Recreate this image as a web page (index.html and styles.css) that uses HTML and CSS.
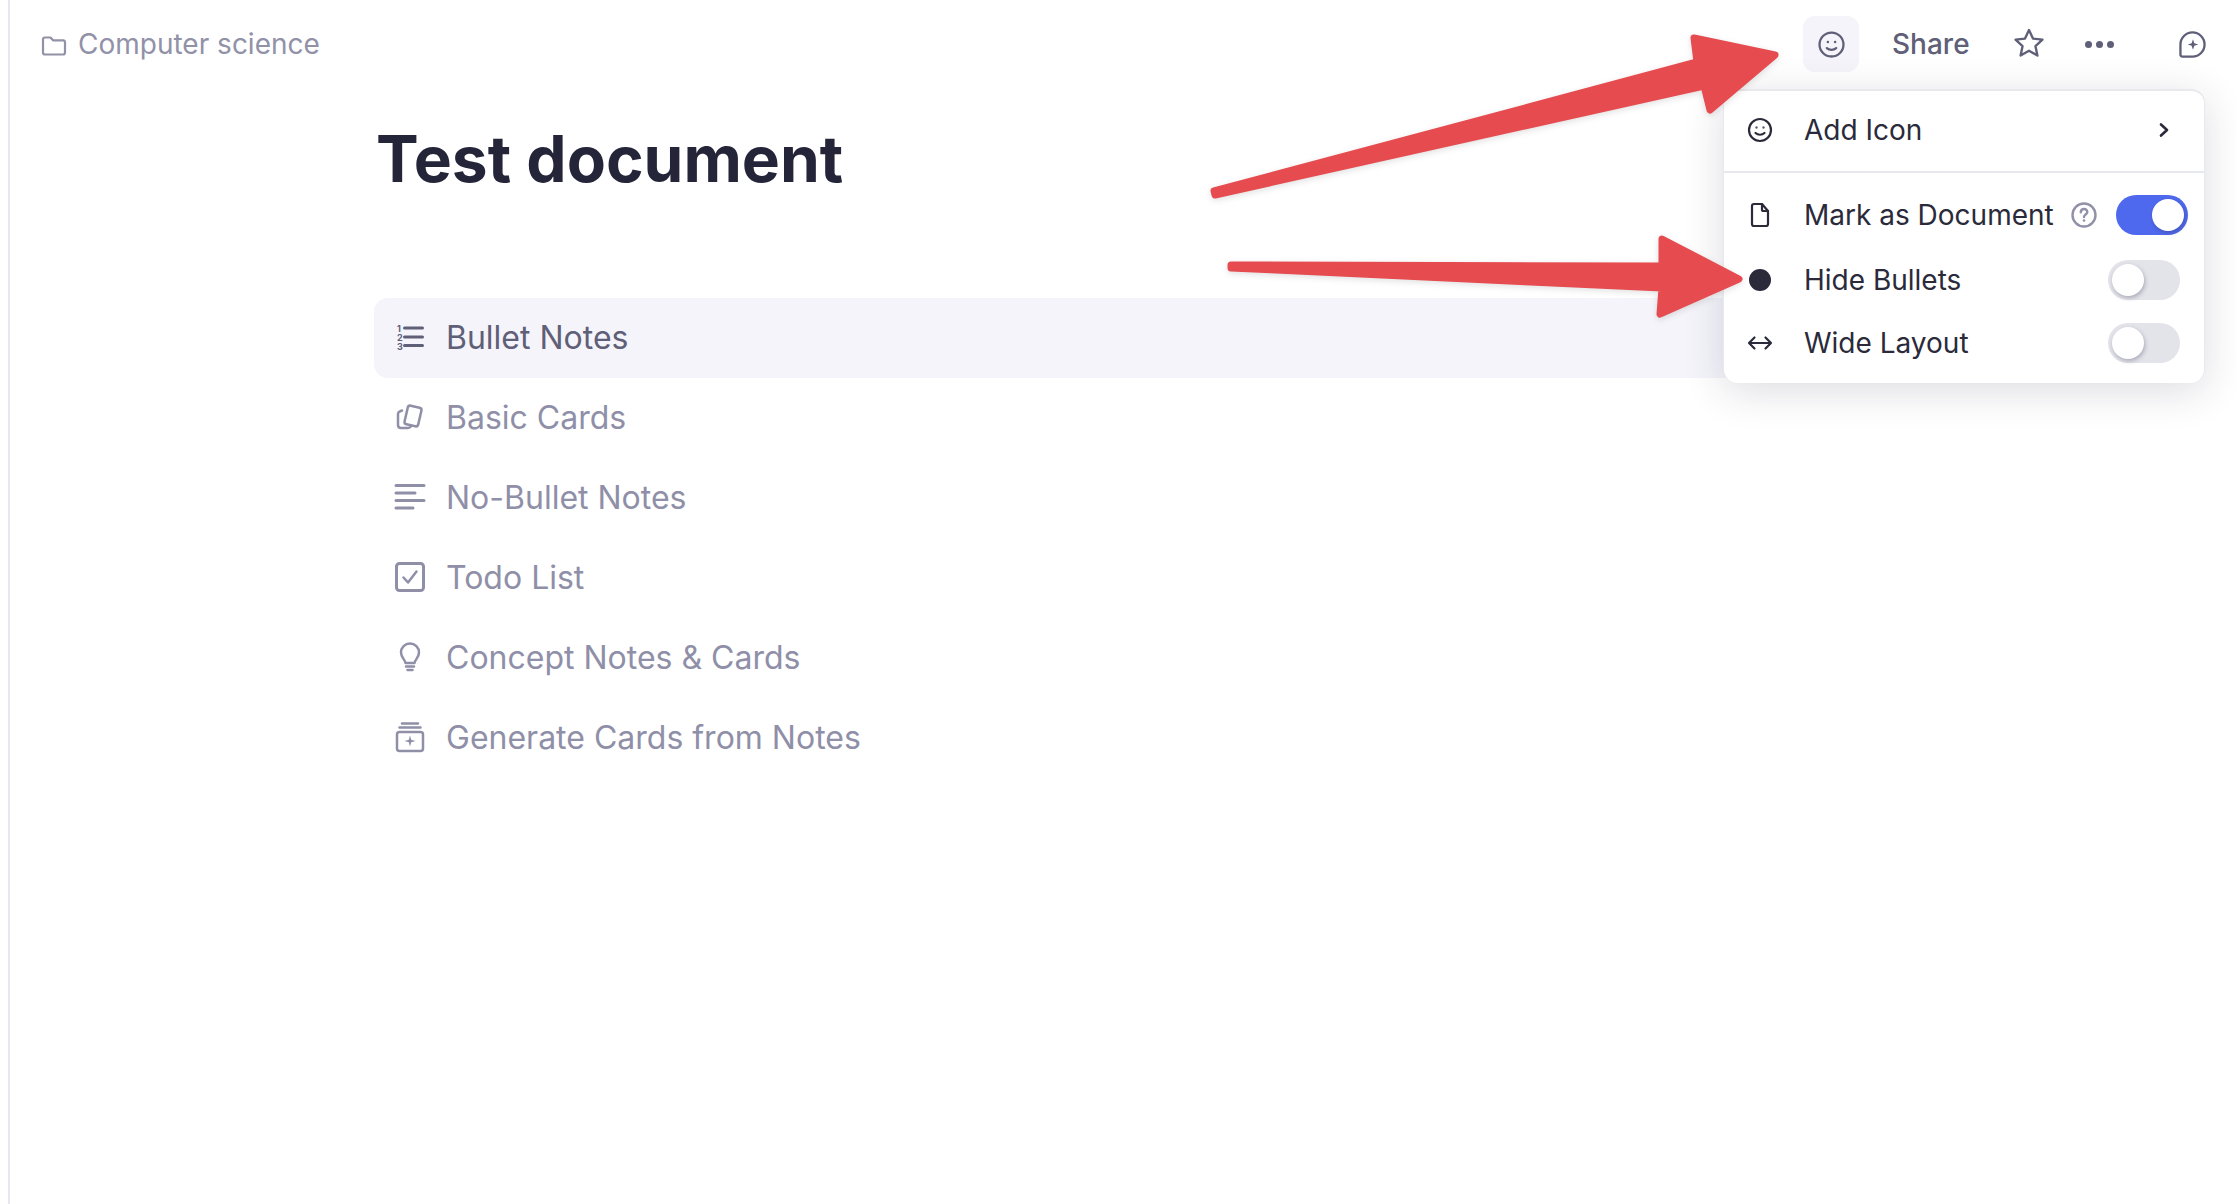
FILE: index.html
```html
<!DOCTYPE html>
<html>
	<head>
		<meta http-equiv="Content-Type" content="text/html; charset=utf-8"/>
		<title>Test document</title>
		<link rel="stylesheet" href="styles.css">
	</head>
	<body>
	<div class="page">
		<div class="topbar">
			<div class="crumb">
				<svg class="crumbIcon" viewBox="0 0 24 20"><path d="M1 3.500C1 2.400 1.900 1.500 3 1.500h5.500l2.500 2.800h10c1.100 0 2 .9 2 2v10.200c0 1.100-.9 2-2 2H3c-1.100 0-2-.9-2-2z"/></svg>
				<span>Computer science</span>
			</div>
			<div class="actions">
				<div class="iconBtn active">
					<svg class="smile" viewBox="1 1 24 24"><circle cx="13" cy="13" r="11.500"/><path d="M8.500 16.500c2.500 2.300 6.500 2.300 9 0"/><circle class="dot" cx="9.500" cy="10.500" r="1.200"/><circle class="dot" cx="16.500" cy="10.500" r="1.200"/></svg>
				</div>
				<span class="shareBtn">Share</span>
				<svg class="star" viewBox="2 2.500 26 26"><path d="M15 2.500l3.700 8 8.800 1-6.500 6 1.800 8.700-7.800-4.400-7.800 4.400 1.800-8.700-6.500-6 8.800-1z"/></svg>
				<div class="dots"><i></i><i></i><i></i></div>
				<svg class="bubble" viewBox="0 0 28 28"><path d="M14 1.500a12.500 12.500 0 1 1 0 25H3.500a2 2 0 0 1-2-2V14A12.500 12.500 0 0 1 14 1.500z"/><path class="fill" d="M14.500 8.500l1.400 4.100 4.100 1.400-4.100 1.400-1.400 4.100-1.400-4.100-4.100-1.400 4.100-1.400z"/></svg>
			</div>
		</div>

		<div class="content">
			<h1 class="docTitle">Test document</h1>
			<ul class="typeList">
				<li class="typeRow current">
					<svg class="typeIcon" viewBox="0 0 30 30"><path class="thick" d="M9.500 6h18M9.500 15h18M9.500 23.500h18"/><text x="2" y="9.500">1</text><text x="2" y="18.500">2</text><text x="2" y="27.500">3</text></svg>
					<span>Bullet Notes</span>
				</li>
				<li class="typeRow">
					<svg class="typeIcon" viewBox="0 0 30 30"><path d="M7 8.500l-2.500 1.200c-1 .4-1.500 1.200-1.500 2.200v11c0 2 1.200 3 3 3h7c1.500 0 2.300-.5 3-1.500"/><rect x="11" y="4.500" width="14" height="19" rx="2.500" transform="rotate(13 18 14)"/></svg>
					<span>Basic Cards</span>
				</li>
				<li class="typeRow">
					<svg class="typeIcon" viewBox="0 0 30 30"><path class="thick" d="M1 3.500h28M1 11h19M1 18.500h28M1 26h17"/></svg>
					<span>No-Bullet Notes</span>
				</li>
				<li class="typeRow">
					<svg class="typeIcon" viewBox="0 0 30 30"><rect class="thick" x="1.500" y="1.500" width="27" height="27" rx="3"/><path d="M8.500 15.500l4.500 5 8.500-11"/></svg>
					<span>Todo List</span>
				</li>
				<li class="typeRow">
					<svg class="typeIcon" viewBox="0 0 30 30"><path d="M10.500 21c0-3-4.500-5-4.500-10.500a9 9 0 0 1 18 0C24 16 19.500 18 19.500 21z"/><path d="M11 24.500h8M12.500 28h5"/></svg>
					<span>Concept Notes &amp; Cards</span>
				</li>
				<li class="typeRow">
					<svg class="typeIcon" viewBox="0 0 30 30"><path d="M7 1.500h16M4.500 5.500h21"/><rect x="2" y="10" width="26" height="19" rx="2.500"/><path class="fill" d="M15 13.500l1.200 4.300 4.300 1.200-4.300 1.200-1.200 4.300-1.200-4.300-4.300-1.200 4.300-1.200z"/></svg>
					<span>Generate Cards from Notes</span>
				</li>
			</ul>
		</div>

		<div class="docMenu">
			<div class="menuGroup">
				<div class="menuRow addRow">
					<svg class="menuIcon" viewBox="0 0 26 26"><circle cx="13" cy="13" r="11"/><path d="M8.500 16c2.500 2.300 6.500 2.300 9 0"/><circle class="dot" cx="9.500" cy="10.500" r="1.200"/><circle class="dot" cx="16.500" cy="10.500" r="1.200"/></svg>
					<span class="menuLabel">Add Icon</span>
					<svg class="chevron" viewBox="0 0 12 16"><path d="M3 2.500L9 8l-6 5.500"/></svg>
				</div>
			</div>
			<div class="menuRow docRow">
				<svg class="menuIcon" viewBox="0 0 26 26"><path d="M5 4a2 2 0 0 1 2-2h8l6 7v13a2 2 0 0 1-2 2H7a2 2 0 0 1-2-2z"/><path d="M15 2v5.500a1.500 1.500 0 0 0 1.500 1.500H21"/></svg>
				<span class="menuLabel">Mark as Document</span>
				<svg class="help" viewBox="0 0 26 26"><circle cx="13" cy="13" r="11.500"/><path d="M9.800 10.300c0-4.300 6.500-4.300 6.500-.300 0 2.500-3.300 2.500-3.300 5"/><circle class="dot" cx="13" cy="18.500" r="1.300"/></svg>
				<div class="toggle on"><i></i></div>
			</div>
			<div class="menuRow bulletRow">
				<div class="menuBullet"></div>
				<span class="menuLabel">Hide Bullets</span>
				<div class="toggle"><i></i></div>
			</div>
			<div class="menuRow wideRow">
				<svg class="menuIcon" viewBox="0 0 26 26"><path d="M2 13h22M7.500 7.500L2 13l5.500 5.500M18.500 7.500L24 13l-5.500 5.500"/></svg>
				<span class="menuLabel">Wide Layout</span>
				<div class="toggle"><i></i></div>
			</div>
		</div>

		<svg class="arrows" viewBox="0 0 2236 1204">
			<polygon points="1214,191 1697,62 1694,38 1775,55 1710,110 1704,86 1215,195"/>
			<polygon points="1231,265 1662,266 1662,239 1739,279 1660,314 1662,288 1231,268"/>
		</svg>
	</div>
	</body>
</html>
```

FILE: styles.css
```css
html,body{margin:0; padding:0; background:#fff; overflow:hidden; height:100%;}
body{font-family:"Inter","Liberation Sans",sans-serif; color:#2a2a3a;}
.page{position:relative; width:2228px; height:1204px; box-sizing:border-box; margin-left:8px; border-left:2px solid #e8e8ef; overflow:hidden;}
svg{display:block; fill:none; stroke-linecap:round; stroke-linejoin:round; overflow:visible;}

.topbar{display:flex; justify-content:space-between; align-items:center; width:2164px; height:56px; padding:16px 0 0 32px;}
.crumb{display:flex; align-items:center; gap:12px; font-size:28px; color:#9191a8;}
.crumbIcon{width:24px; height:20px; stroke:#9191a8; stroke-width:2.200; margin-top:3px;}
.actions{display:flex; align-items:center; flex:none; color:#5f5f78;}
.iconBtn{width:56px; height:56px; border-radius:12px; display:flex; align-items:center; justify-content:center;}
.iconBtn.active{background:#f4f4fa;}
.smile{width:25px; height:25px; stroke:#5f5f78; stroke-width:2.200;}
.dot{fill:currentColor; stroke:none; color:#5f5f78;}
.shareBtn{font-size:28px; font-weight:500; margin-left:33px; width:77px;}
.star{width:28px; height:28px; stroke:#5f5f78; stroke-width:2.200; margin-left:46px;}
.dots{display:flex; gap:4px; margin-left:42px;}
.dots i{width:7px; height:7px; border-radius:50%; background:#5f5f78;}
.bubble{width:27px; height:27px; stroke:#5f5f78; stroke-width:2.400; margin-left:65px;}
.bubble .fill{fill:#5f5f78; stroke:none;}

.content{margin-left:364px; width:1486px;}
.docTitle{margin:0; padding:47px 0 0 2px; height:226px; box-sizing:border-box; font-size:64px; line-height:80px; font-weight:700; color:#25253a;}
.typeList{list-style:none; margin:0; padding:0;}
.typeRow{display:flex; align-items:center; gap:21px; height:80px; box-sizing:border-box; padding:0 0 2px 21px; border-radius:14px; font-size:32px; color:#8f8fa8;}
.typeRow.current{background:#f4f4fa; color:#5f5f78;}
.typeIcon{width:30px; height:30px; flex:none; stroke:currentColor; stroke-width:2.500;}
.typeIcon .thick{stroke-width:3;}
.typeIcon .fill{fill:currentColor; stroke:none;}
.typeIcon text{font-size:9px; font-weight:700; fill:currentColor; stroke:none;}

.docMenu{position:absolute; left:1713px; top:89px; width:482px; height:294px; box-sizing:border-box; background:#fff; border:2px solid #e8e8ef; border-width:2px 1px 0 1px; border-radius:14px; box-shadow:0 8px 40px rgba(40,40,70,.16); font-size:28px;}
.menuGroup{height:82px; box-sizing:border-box; border-bottom:2px solid #e8e8ef;}
.menuRow{display:flex; align-items:center; padding-left:23px;}
.addRow{height:78px;}
.docRow{height:62px; margin-top:11px;}
.bulletRow{height:68px;}
.wideRow{height:58px;}
.menuIcon{width:26px; height:26px; flex:none; stroke:#2a2a3a; stroke-width:2.200;}
.menuLabel{margin-left:31px; color:#2a2a3a;}
.chevron{width:12px; height:16px; margin:0 34px 0 auto; stroke:#2a2a3a; stroke-width:2.600;}
.menuBullet{width:22px; height:22px; margin:0 2px; border-radius:50%; background:#2a2a3a; flex:none;}
.help{width:26px; height:26px; margin-left:auto; stroke:#9191a8; stroke-width:2.400;}
.help .dot{color:#9191a8;}
.toggle{position:relative; width:72px; height:40px; margin:0 24px 0 auto; border-radius:20px; background:#e3e3ea;}
.toggle i{position:absolute; left:4px; top:4px; width:32px; height:32px; border-radius:50%; background:#fff; box-shadow:1px 2px 4px rgba(40,40,70,.3);}
.toggle.on{margin:0 16px 0 19px; background:#4f69ee;}
.toggle.on i{left:36px;}

.arrows{position:absolute; left:-10px; top:0; width:2236px; height:1204px; fill:#e54b4f; stroke:#e54b4f; stroke-width:7; filter:drop-shadow(0 2px 3px rgba(0,0,0,.12));}
```
